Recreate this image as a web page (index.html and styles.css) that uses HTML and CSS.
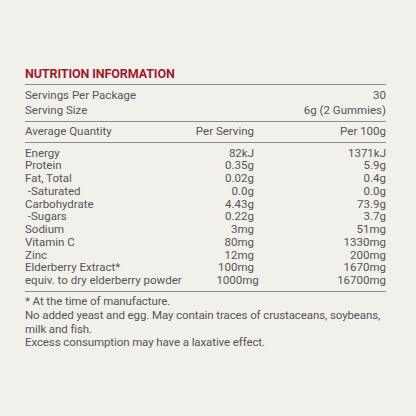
FILE: index.html
```html
<!DOCTYPE html>
<html>
<head>
<meta charset="utf-8">
<link rel="stylesheet" href="styles.css">
</head>
<body>
<div class="panel">
  <h1 class="title">NUTRITION INFORMATION</h1>
  <div class="section servings">
    <div class="row"><span class="label">Servings Per Package</span><span class="v2">30</span></div>
    <div class="row"><span class="label">Serving Size</span><span class="v2">6g (2 Gummies)</span></div>
  </div>
  <div class="section head">
    <div class="row"><span class="label">Average Quantity</span><span class="v1">Per Serving</span><span class="v2">Per 100g</span></div>
  </div>
  <div class="section body">
    <div class="row"><span class="label">Energy</span><span class="v1">82kJ</span><span class="v2">1371kJ</span></div>
    <div class="row"><span class="label">Protein</span><span class="v1">0.35g</span><span class="v2">5.9g</span></div>
    <div class="row"><span class="label">Fat, Total</span><span class="v1">0.02g</span><span class="v2">0.4g</span></div>
    <div class="row"><span class="label"> -Saturated</span><span class="v1">0.0g</span><span class="v2">0.0g</span></div>
    <div class="row"><span class="label">Carbohydrate</span><span class="v1">4.43g</span><span class="v2">73.9g</span></div>
    <div class="row"><span class="label"> -Sugars</span><span class="v1">0.22g</span><span class="v2">3.7g</span></div>
    <div class="row"><span class="label">Sodium</span><span class="v1">3mg</span><span class="v2">51mg</span></div>
    <div class="row"><span class="label">Vitamin C</span><span class="v1">80mg</span><span class="v2">1330mg</span></div>
    <div class="row"><span class="label">Zinc</span><span class="v1">12mg</span><span class="v2">200mg</span></div>
    <div class="row"><span class="label">Elderberry Extract*</span><span class="v1">100mg</span><span class="v2">1670mg</span></div>
    <div class="row"><span class="label">equiv. to dry elderberry powder</span><span class="v1">1000mg</span><span class="v2">16700mg</span></div>
  </div>
  <div class="notes">
    <p>* At the time of manufacture.</p>
    <p>No added yeast and egg. May contain traces of crustaceans, soybeans, milk and fish.</p>
    <p>Excess consumption may have a laxative effect.</p>
  </div>
</div>
</body>
</html>
```
FILE: styles.css
```css
html, body {
  margin: 0;
  padding: 0;
  background: #f2f0eb;
}
body {
  width: 416px;
  height: 416px;
  overflow: hidden;
  font-family: Roboto, "Liberation Sans", sans-serif;
  color: #555555;
  font-size: 11.5px;
}
.panel {
  padding: 66px 30px 0 25px;
}
.title {
  margin: 0;
  font-size: 12.5px;
  font-weight: 700;
  color: #9c1c2f;
  letter-spacing: -0.1px;
  line-height: 16px;
  padding-bottom: 1.5px;
  border-bottom: 1.5px solid #8c8c8c;
}
.section {
  border-bottom: 1.5px solid #8c8c8c;
}
.servings {
  padding: 3px 0 3px;
}
.servings .row {
  line-height: 15px;
}
.head {
  padding: 2.5px 0 3px;
}
.head .row {
  line-height: 15px;
}
.body {
  padding: 3.5px 0 4px;
}
.row {
  display: flex;
  line-height: 12.75px;
}
.label {
  flex: 1;
  white-space: pre;
}
.v1 {
  width: 80px;
  text-align: right;
}
.v2 {
  width: 132px;
  text-align: right;
}
.notes {
  padding-top: 3.5px;
  line-height: 13.7px;
  letter-spacing: -0.1px;
}
.notes p {
  margin: 0;
}
```
